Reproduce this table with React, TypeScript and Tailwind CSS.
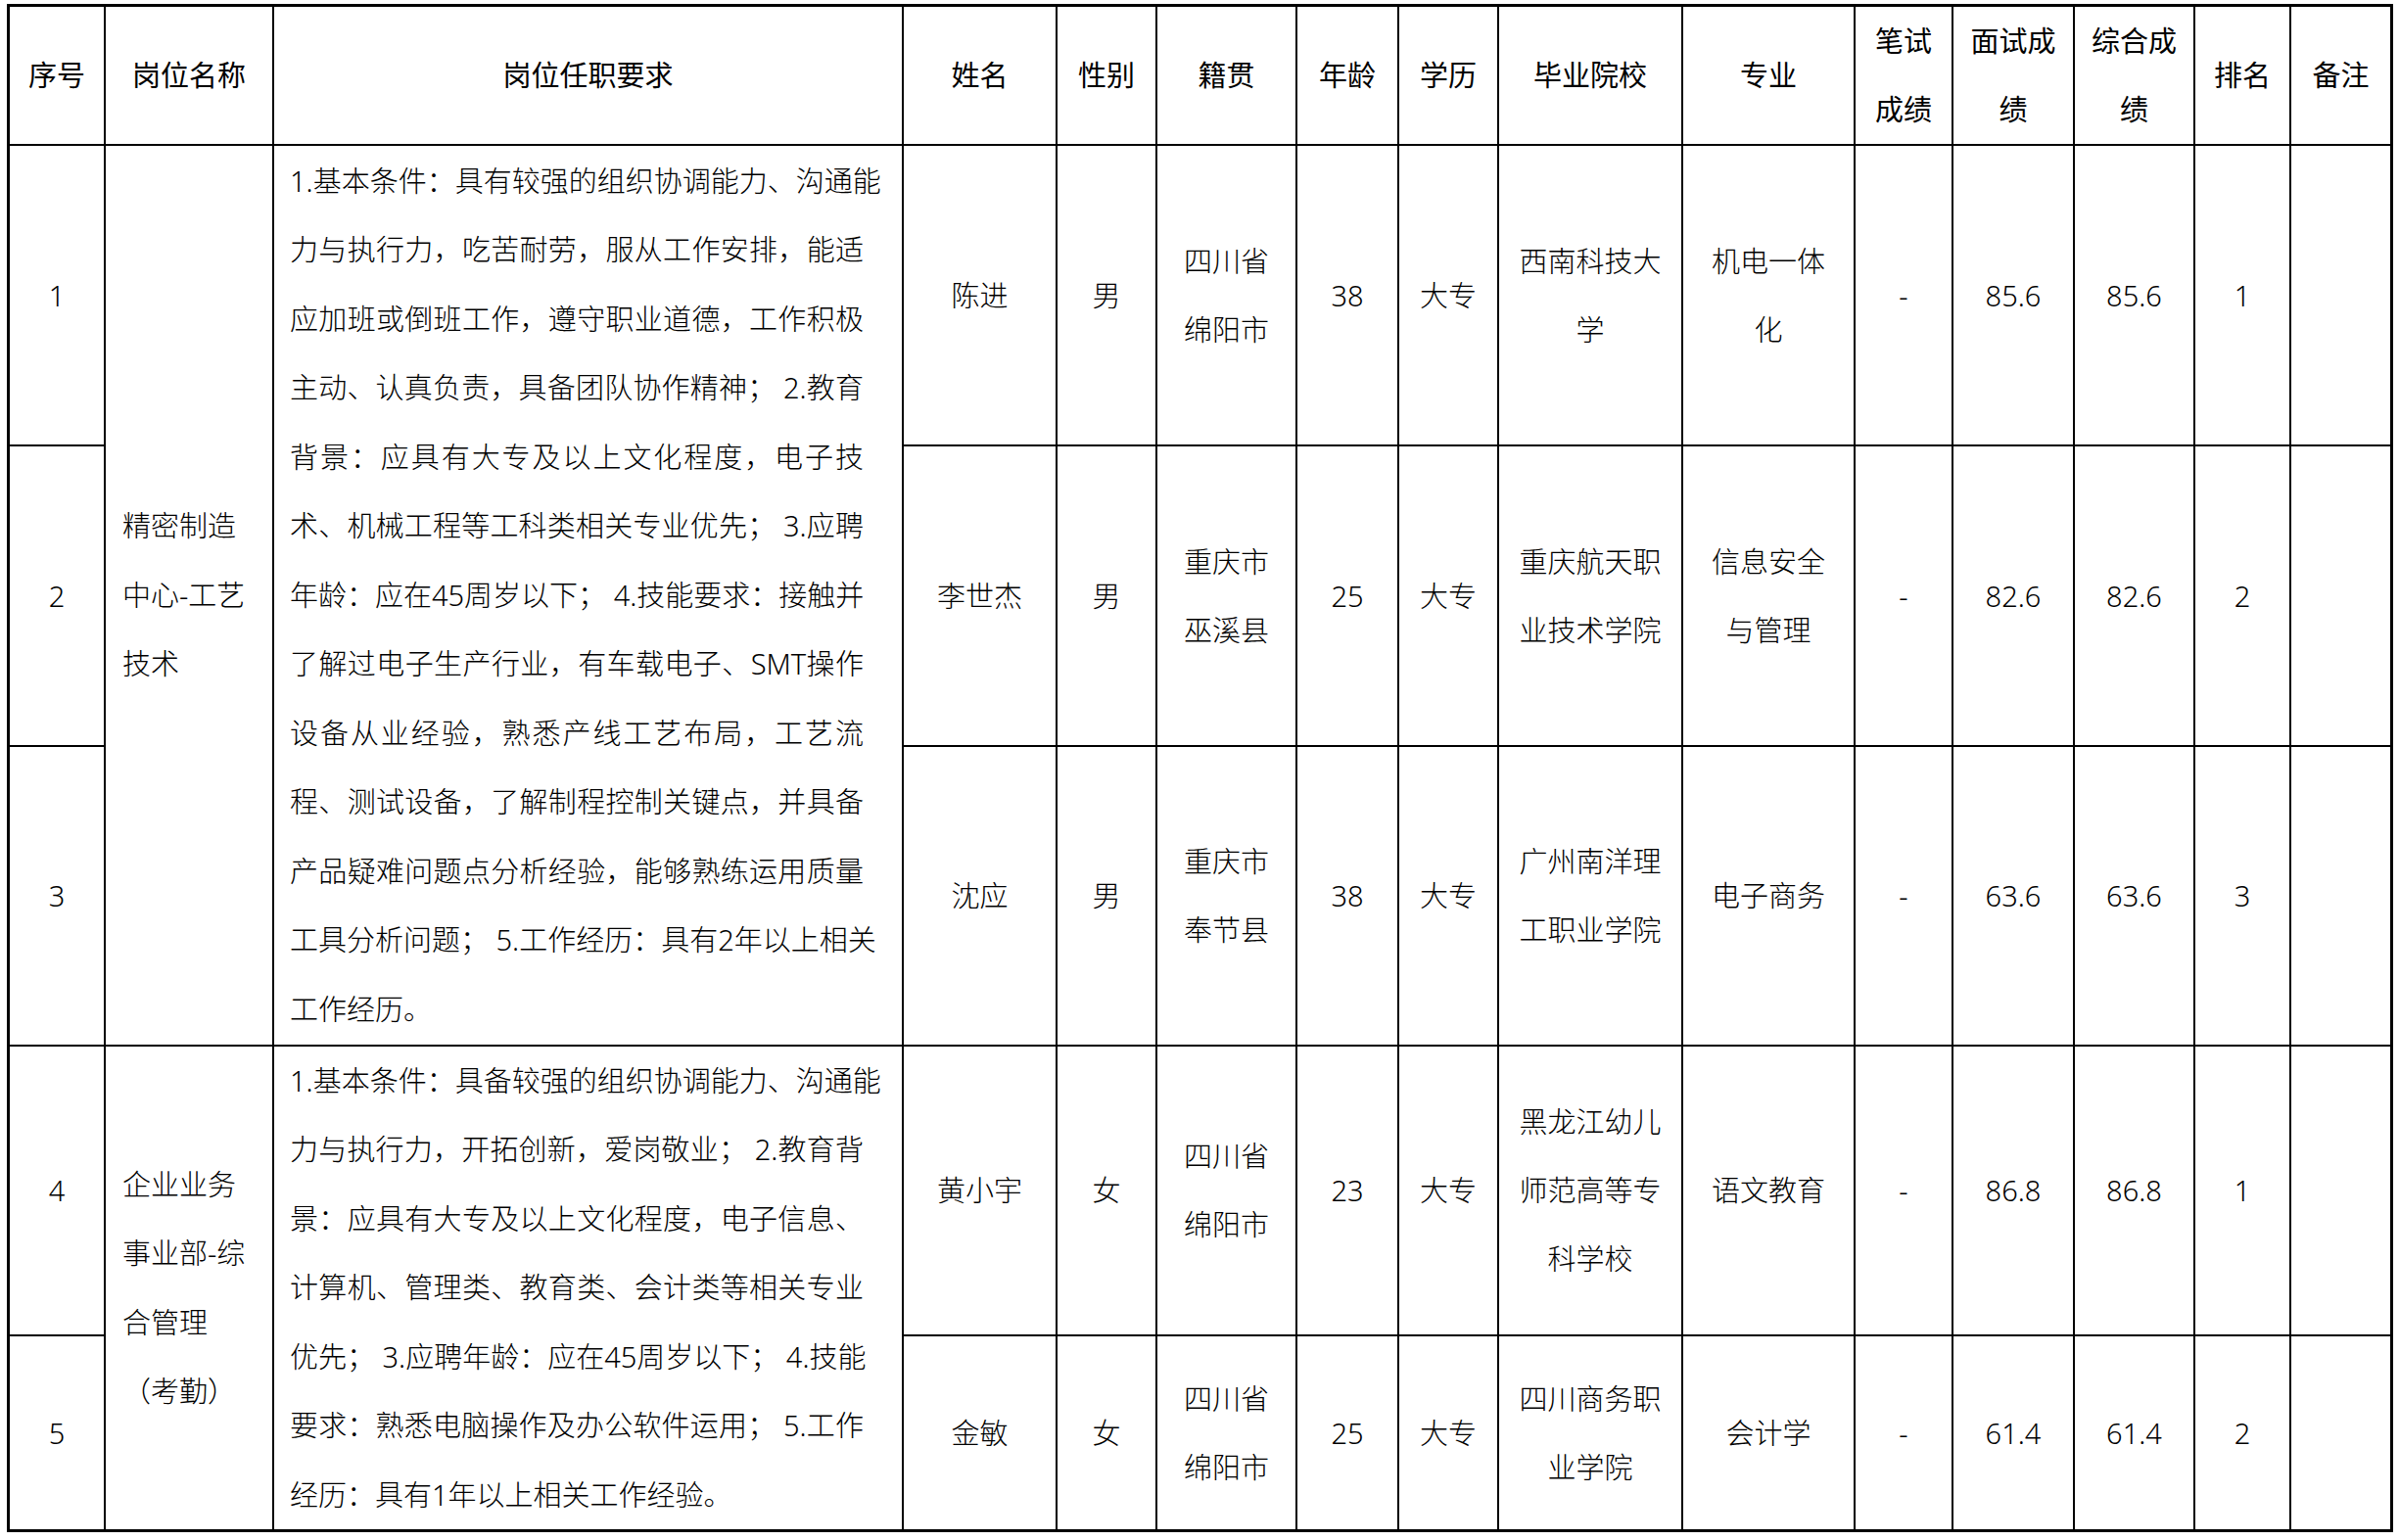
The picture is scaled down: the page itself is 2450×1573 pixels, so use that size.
import React from "react";

type Row = {
  no: string;
  name: string;
  sex: string;
  origin: string[];
  age: string;
  edu: string;
  school: string[];
  major: string[];
  written: string;
  interview: string;
  total: string;
  rank: string;
};

const groupA = {
  post: ["精密制造", "中心-工艺", "技术"],
  req: [
    "1.基本条件：具有较强的组织协调能力、沟通能",
    "力与执行力，吃苦耐劳，服从工作安排，能适",
    "应加班或倒班工作，遵守职业道德，工作积极",
    "主动、认真负责，具备团队协作精神； 2.教育",
    "背景：应具有大专及以上文化程度，电子技",
    "术、机械工程等工科类相关专业优先； 3.应聘",
    "年龄：应在45周岁以下； 4.技能要求：接触并",
    "了解过电子生产行业，有车载电子、SMT操作",
    "设备从业经验，熟悉产线工艺布局，工艺流",
    "程、测试设备，了解制程控制关键点，并具备",
    "产品疑难问题点分析经验，能够熟练运用质量",
    "工具分析问题； 5.工作经历：具有2年以上相关",
    "工作经历。",
  ],
  rows: [
    { no: "1", name: "陈进", sex: "男", origin: ["四川省", "绵阳市"], age: "38", edu: "大专", school: ["西南科技大", "学"], major: ["机电一体", "化"], written: "-", interview: "85.6", total: "85.6", rank: "1" },
    { no: "2", name: "李世杰", sex: "男", origin: ["重庆市", "巫溪县"], age: "25", edu: "大专", school: ["重庆航天职", "业技术学院"], major: ["信息安全", "与管理"], written: "-", interview: "82.6", total: "82.6", rank: "2" },
    { no: "3", name: "沈应", sex: "男", origin: ["重庆市", "奉节县"], age: "38", edu: "大专", school: ["广州南洋理", "工职业学院"], major: ["电子商务"], written: "-", interview: "63.6", total: "63.6", rank: "3" },
  ] as Row[],
};

const groupB = {
  post: ["企业业务", "事业部-综", "合管理", "（考勤）"],
  req: [
    "1.基本条件：具备较强的组织协调能力、沟通能",
    "力与执行力，开拓创新，爱岗敬业； 2.教育背",
    "景：应具有大专及以上文化程度，电子信息、",
    "计算机、管理类、教育类、会计类等相关专业",
    "优先； 3.应聘年龄：应在45周岁以下； 4.技能",
    "要求：熟悉电脑操作及办公软件运用； 5.工作",
    "经历：具有1年以上相关工作经验。",
  ],
  rows: [
    { no: "4", name: "黄小宇", sex: "女", origin: ["四川省", "绵阳市"], age: "23", edu: "大专", school: ["黑龙江幼儿", "师范高等专", "科学校"], major: ["语文教育"], written: "-", interview: "86.8", total: "86.8", rank: "1" },
    { no: "5", name: "金敏", sex: "女", origin: ["四川省", "绵阳市"], age: "25", edu: "大专", school: ["四川商务职", "业学院"], major: ["会计学"], written: "-", interview: "61.4", total: "61.4", rank: "2" },
  ] as Row[],
};

function Cell({ lines, className = "" }: { lines: string[]; className?: string }) {
  return (
    <div className={`bg-white flex flex-col items-center justify-center text-center leading-[70px] ${className}`}>
      {lines.map((l, i) => (
        <div key={i} className="whitespace-nowrap">
          {l}
        </div>
      ))}
    </div>
  );
}

function HeadCell({ lines }: { lines: string[] }) {
  return <Cell lines={lines} className="font-normal" />;
}

function PostCell({ lines, span }: { lines: string[]; span: string }) {
  return (
    <div className={`bg-white flex flex-col justify-center pl-[17px] leading-[70.5px] ${span}`}>
      {lines.map((l, i) => (
        <div key={i} className="whitespace-nowrap">
          {l}
        </div>
      ))}
    </div>
  );
}

function ReqCell({ lines, span }: { lines: string[]; span: string }) {
  return (
    <div className={`bg-white flex flex-col justify-center pl-[16px] leading-[70.5px] ${span}`}>
      {lines.map((l, i) => (
        <div
          key={i}
          className={`w-[586px] whitespace-nowrap ${i < lines.length - 1 ? "text-justify [text-align-last:justify]" : "text-left"}`}
        >
          {l}
        </div>
      ))}
    </div>
  );
}

function DataCells({ r }: { r: Row }) {
  return (
    <>
      <Cell lines={[r.name]} />
      <Cell lines={[r.sex]} />
      <Cell lines={r.origin} />
      <Cell lines={[r.age]} />
      <Cell lines={[r.edu]} />
      <Cell lines={r.school} />
      <Cell lines={r.major} />
      <Cell lines={[r.written]} />
      <Cell lines={[r.interview]} />
      <Cell lines={[r.total]} />
      <Cell lines={[r.rank]} />
      <div className="bg-white" />
    </>
  );
}

export default function App() {
  const [a1, a2, a3] = groupA.rows;
  const [b1, b2] = groupB.rows;

  return (
    <div className="bg-white min-h-[1573px] w-[2450px] pt-[4px] pl-[7px] text-black font-['Noto_Sans','Noto_Sans_CJK_SC',sans-serif] text-[29px] font-light">
      <div className="grid w-fit grid-cols-[96px_170px_641px_155px_100px_141px_102px_100px_186px_174px_98px_122px_121px_96px_101px] grid-rows-[140px_305px_305px_304px_294px_197px] gap-[2px] bg-black border-[3px] border-black">
        {/* header */}
        <HeadCell lines={["序号"]} />
        <HeadCell lines={["岗位名称"]} />
        <HeadCell lines={["岗位任职要求"]} />
        <HeadCell lines={["姓名"]} />
        <HeadCell lines={["性别"]} />
        <HeadCell lines={["籍贯"]} />
        <HeadCell lines={["年龄"]} />
        <HeadCell lines={["学历"]} />
        <HeadCell lines={["毕业院校"]} />
        <HeadCell lines={["专业"]} />
        <HeadCell lines={["笔试", "成绩"]} />
        <HeadCell lines={["面试成", "绩"]} />
        <HeadCell lines={["综合成", "绩"]} />
        <HeadCell lines={["排名"]} />
        <HeadCell lines={["备注"]} />

        {/* 精密制造中心 */}
        <Cell lines={[a1.no]} />
        <PostCell lines={groupA.post} span="row-span-3" />
        <ReqCell lines={groupA.req} span="row-span-3" />
        <DataCells r={a1} />
        <Cell lines={[a2.no]} />
        <DataCells r={a2} />
        <Cell lines={[a3.no]} />
        <DataCells r={a3} />

        {/* 企业业务事业部 */}
        <Cell lines={[b1.no]} />
        <PostCell lines={groupB.post} span="row-span-2" />
        <ReqCell lines={groupB.req} span="row-span-2" />
        <DataCells r={b1} />
        <Cell lines={[b2.no]} />
        <DataCells r={b2} />
      </div>
    </div>
  );
}
